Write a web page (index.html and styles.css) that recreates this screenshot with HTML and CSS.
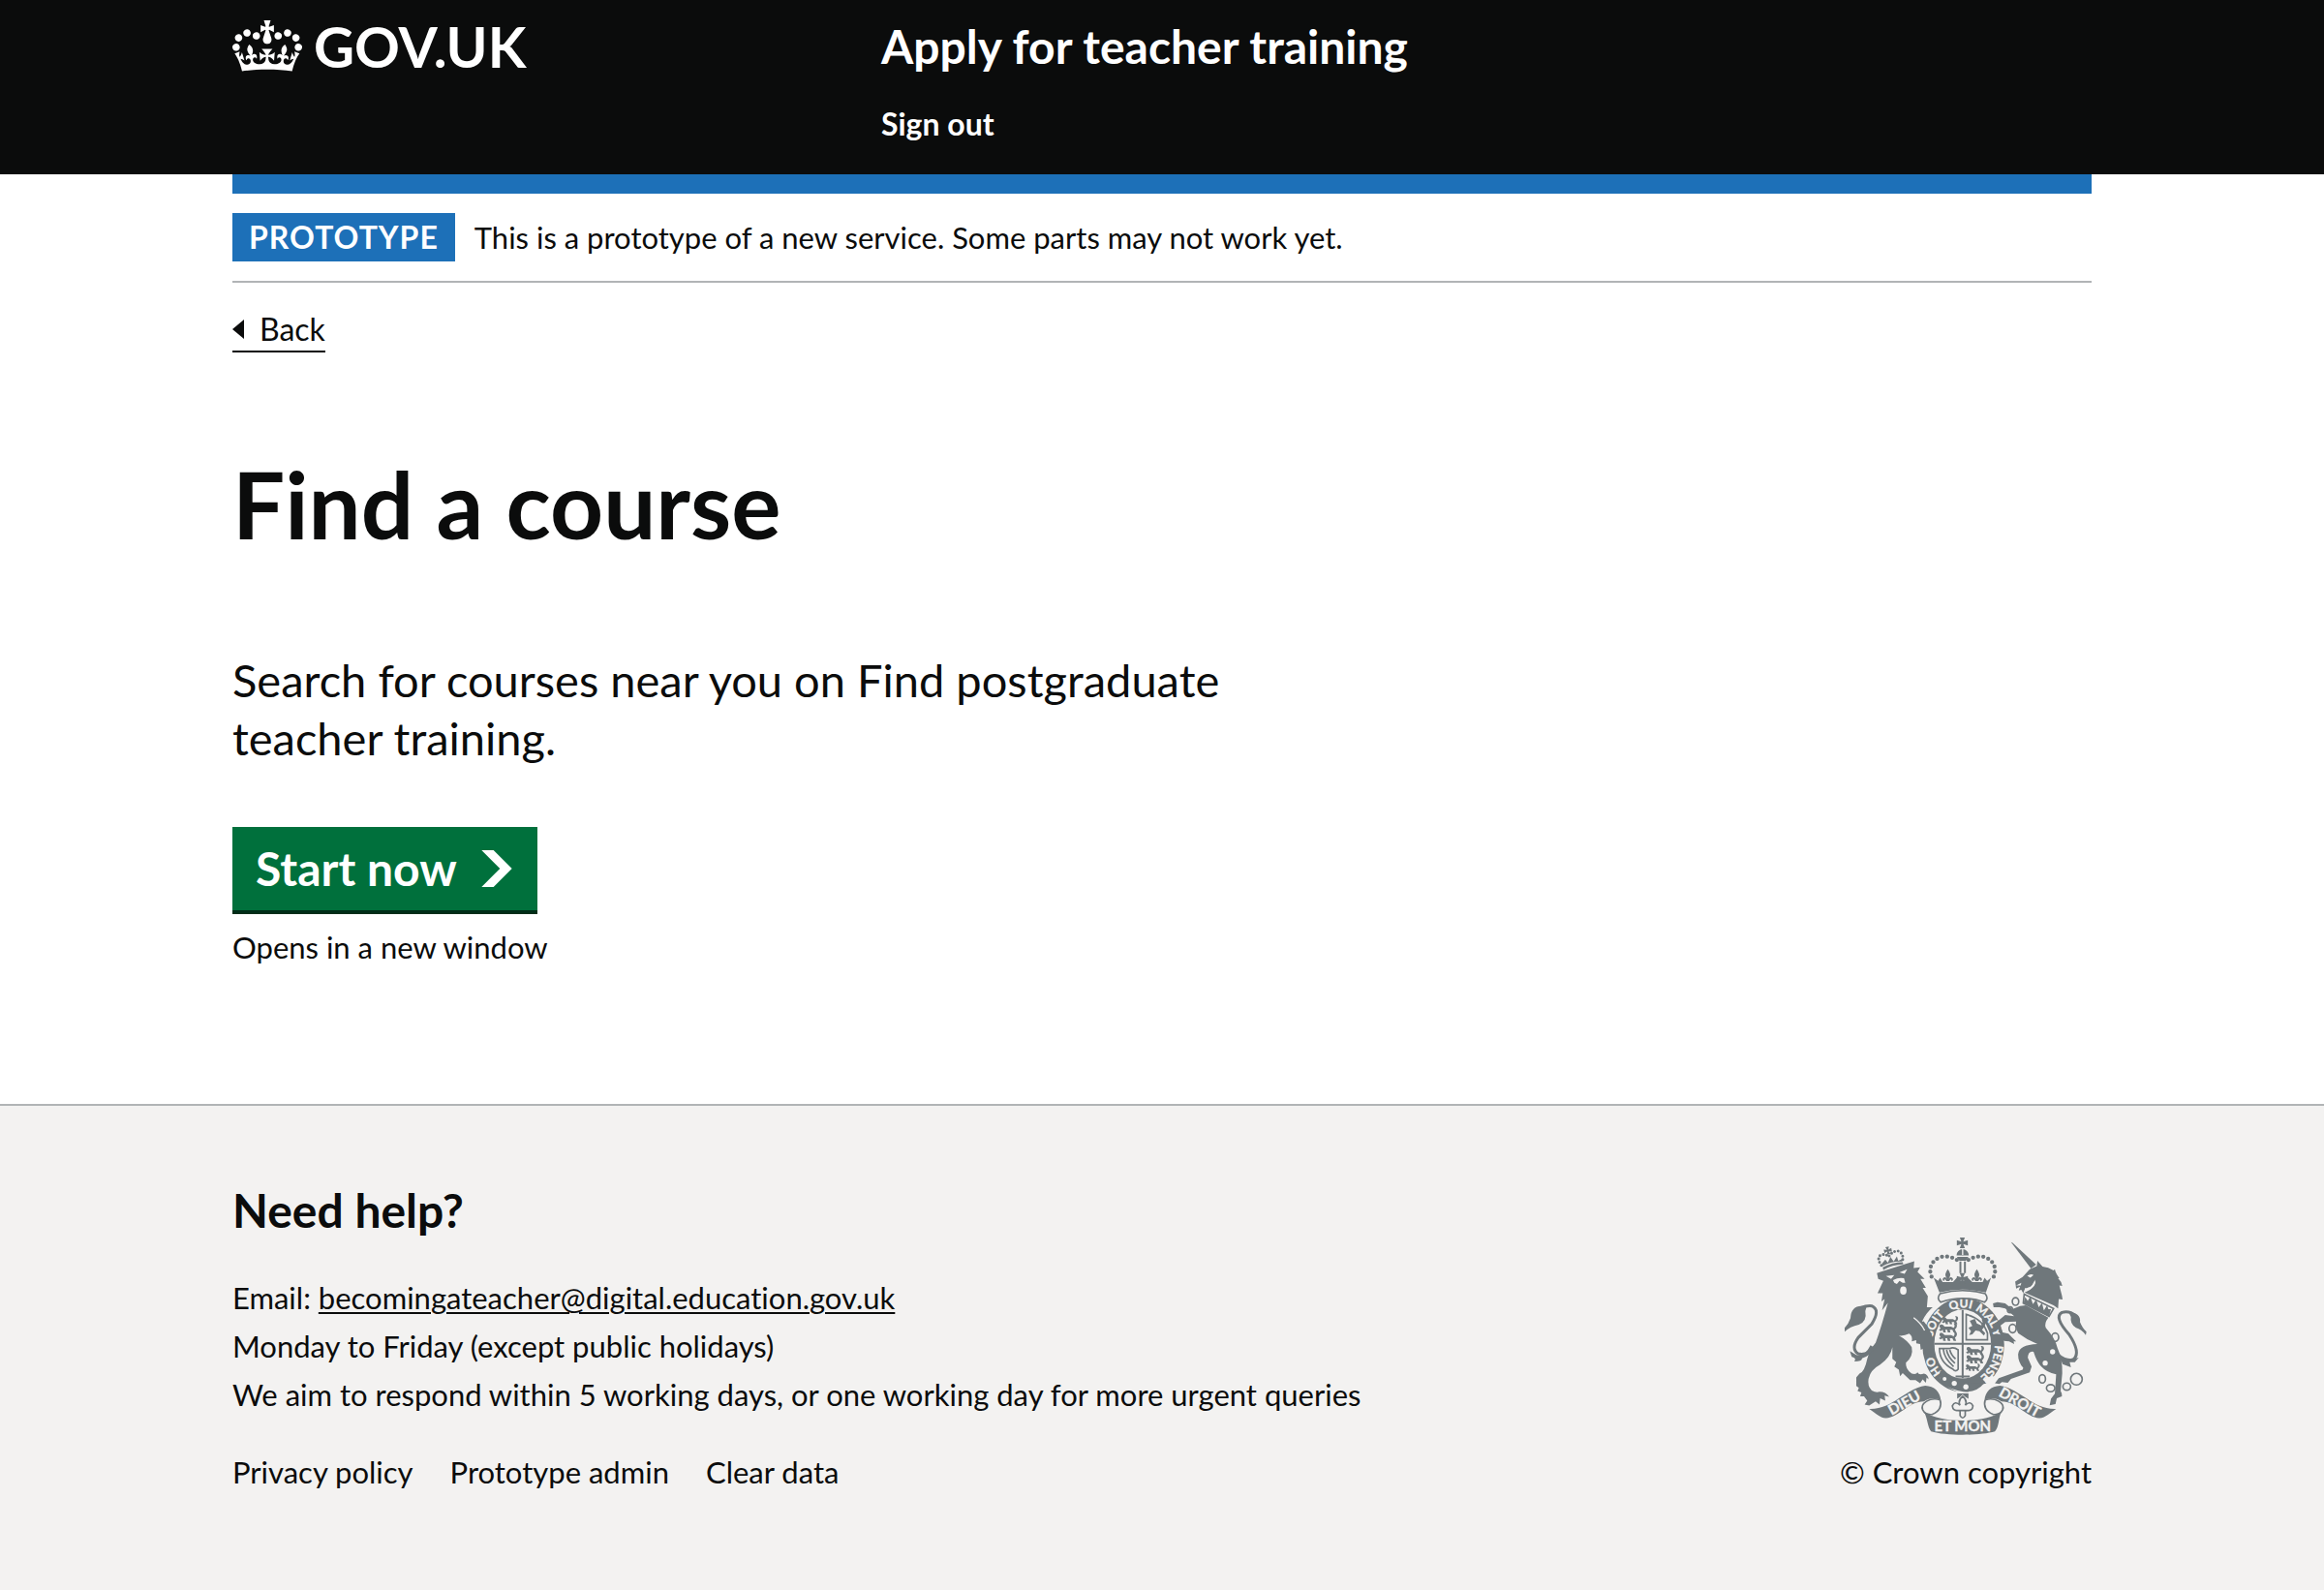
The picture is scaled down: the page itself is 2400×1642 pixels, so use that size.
FILE: index.html
```html
<!DOCTYPE html>
<html lang="en">
<head>
<meta charset="utf-8">
<meta name="viewport" content="width=device-width, initial-scale=1">
<title>Find a course - Apply for teacher training - GOV.UK</title>
<link rel="stylesheet" href="styles.css">
</head>
<body class="page">
<header class="header">
  <div class="container header-row">
    <a class="logo" href="#">
      <svg class="logo-crown" viewBox="0 0 132 97" aria-hidden="true"><path fill="currentColor" fill-rule="evenodd" d="M25 30.2c3.5 1.5 7.7-.2 9.1-3.7 1.5-3.6-.2-7.8-3.9-9.2-3.6-1.4-7.6.3-9.1 3.9-1.4 3.5.3 7.5 3.9 9zM9 39.5c3.6 1.5 7.8-.2 9.2-3.7 1.5-3.6-.2-7.8-3.9-9.1-3.6-1.5-7.6.2-9.1 3.8-1.4 3.5.3 7.5 3.8 9zM4.4 57.2c3.5 1.5 7.7-.2 9.1-3.8 1.5-3.6-.2-7.7-3.9-9.1-3.5-1.5-7.6.3-9.1 3.8-1.4 3.5.3 7.6 3.9 9.1zm38.3-21.4c3.5 1.5 7.7-.2 9.1-3.8 1.5-3.6-.2-7.7-3.9-9.1-3.6-1.5-7.6.3-9.1 3.8-1.3 3.6.4 7.7 3.9 9.1zm64.4-5.6c-3.6 1.5-7.8-.2-9.1-3.7-1.5-3.6.2-7.8 3.8-9.2 3.6-1.4 7.7.3 9.2 3.9 1.3 3.5-.4 7.5-3.9 9zm15.9 9.3c-3.6 1.5-7.7-.2-9.1-3.7-1.5-3.6.2-7.8 3.7-9.1 3.6-1.5 7.7.2 9.2 3.8 1.5 3.5-.3 7.5-3.8 9zm4.7 17.7c-3.6 1.5-7.8-.2-9.2-3.8-1.5-3.6.2-7.7 3.9-9.1 3.6-1.5 7.7.3 9.2 3.8 1.3 3.5-.4 7.6-3.9 9.1zM89.3 35.8c-3.6 1.5-7.8-.2-9.2-3.8-1.4-3.6.2-7.7 3.9-9.1 3.6-1.5 7.7.3 9.2 3.8 1.4 3.6-.3 7.7-3.9 9.1zM69.7 17.7l8.9 4.7V9.3l-8.9 2.8c-.2-.3-.5-.6-.9-.9L72.4 0H59.6l3.5 11.2c-.3.3-.6.5-.9.9l-8.8-2.8v13.1l8.8-4.7c.3.3.6.7.9.9l-5 15.4v.1c-.2.8-.4 1.6-.4 2.4 0 4.1 3.1 7.5 7 8.1h.2c.3 0 .7.1 1 .1.4 0 .7 0 1-.1h.2c4-.6 7.1-4.1 7.1-8.1 0-.8-.1-1.7-.4-2.4V34l-5.1-15.4c.4-.2.7-.6 1-.9zM66 92.8c16.9 0 32.8 1.1 47.1 3.2 4-16.9 8.9-26.7 14-33.5l-9.6-3.4c1 4.9 1.1 7.2 0 10.2-1.5-1.4-3-4.3-4.2-8.7L108.6 76c2.8-2 5-3.2 7.5-3.3-4.4 9.4-10 11.9-13.6 11.2-4.3-.8-6.3-4.6-5.6-7.9 1-4.7 5.7-5.9 8-.5 4.3-8.7-3-11.4-7.6-8.8 7.1-7.2 7.9-13.5 2.1-21.1-8 6.1-8.1 12.3-4.5 20.8-4.7-5.4-12.1-2.5-9.5 6.2 3.4-5.2 7.9-2 7.2 3.1-.6 4.3-6.4 7.8-13.5 7.2-10.3-.9-10.9-8-11.2-13.8 2.5-.5 7.1 1.8 11 7.3L80.2 60c-4.1 4.4-8 5.3-12.3 5.4 1.4-4.4 8-11.6 8-11.6H55.5s6.4 7.2 7.9 11.6c-4.2-.1-8-1-12.3-5.4l1.4 16.4c3.9-5.5 8.5-7.7 10.9-7.3-.3 5.8-.9 12.8-11.1 13.8-7.2.6-12.9-2.9-13.5-7.2-.7-5 3.8-8.3 7.1-3.1 2.7-8.7-4.6-11.6-9.4-6.2 3.7-8.5 3.6-14.7-4.6-20.8-5.8 7.6-5 13.9 2.2 21.1-4.7-2.6-11.9.1-7.7 8.8 2.3-5.5 7.1-4.2 8.1.5.7 3.3-1.3 7.1-5.7 7.9-3.5.7-9-1.8-13.5-11.2 2.5.1 4.7 1.3 7.5 3.3l-4.7-15.4c-1.2 4.4-2.7 7.2-4.3 8.7-1.1-3-.9-5.3 0-10.2l-9.5 3.4c5 6.9 9.9 16.7 14 33.5 14.8-2.1 30.8-3.2 47.7-3.2z"/></svg>
      <span class="logo-text">GOV.UK</span>
    </a>
    <div class="header-content">
      <a class="service-name" href="#">Apply for teacher training</a>
      <nav class="header-nav" aria-label="Account"><a class="nav-link" href="#">Sign out</a></nav>
    </div>
  </div>
</header>

<div class="container content">
  <div class="phase-banner">
    <strong class="tag">PROTOTYPE</strong>
    <span>This is a prototype of a new service. Some parts may not work yet.</span>
  </div>
  <a class="back-link" href="#">
    <svg class="back-arrow" viewBox="0 0 12 20" aria-hidden="true"><path fill="currentColor" d="M12 0v20L0 10z"/></svg>
    Back
  </a>
  <main class="main">
    <h1 class="title">Find a course</h1>
    <p class="lede">Search for courses near you on Find postgraduate teacher training.</p>
    <button class="start-button" type="button">
      Start now
      <svg class="start-arrow" viewBox="0 0 33 40" aria-hidden="true"><path fill="currentColor" d="M0 0h13l20 20-20 20H0l20-20z"/></svg>
    </button>
    <p class="hint">Opens in a new window</p>
  </main>
</div>

<footer class="footer">
  <div class="container footer-row">
    <div class="footer-help">
      <h2 class="footer-title">Need help?</h2>
      <ul class="plain-list">
        <li>Email: <a class="email" href="mailto:becomingateacher@digital.education.gov.uk">becomingateacher@digital.education.gov.uk</a></li>
        <li>Monday to Friday (except public holidays)</li>
        <li>We aim to respond within 5 working days, or one working day for more urgent queries</li>
      </ul>
      <ul class="plain-list footer-links">
        <li><a class="footer-link" href="#">Privacy policy</a></li>
        <li><a class="footer-link" href="#">Prototype admin</a></li>
        <li><a class="footer-link" href="#">Clear data</a></li>
      </ul>
    </div>
    <a class="copyright" href="#">
      <svg class="crest" viewBox="72 54 751 612" aria-hidden="true">
        <defs>
          <path id="garter" d="M440 503A98 118 0 0 1 342 387A98 118 0 0 1 440 271A98 118 0 0 1 538 387A98 118 0 0 1 440 503"/>
          <g id="fleur"><path d="M0-24Q11-10 4 0L2 4Q6-4 12 0Q18 6 10 10Q12 4 7 5L4 10H-4L-7 5Q-12 4-10 10Q-18 6-12 0Q-6-4-2 4L-4 0Q-11-10 0-24Z"/></g>
          <g id="cross"><path d="M-8-17H8L3-4L17-8V8L3 4L8 17H-8L-3 4L-17 8V-8L-3-4Z"/></g>
          <g id="passant"><path d="M-30-6Q-30-16-20-12L-14-6H6L14-2Q20-8 14-16Q26-18 24-6Q22 0 18 2L22 12H14L10 4L2 4L4 12H-4L-6 4H-12L-10 12H-18L-20 4L-26 8L-32 4L-26 0Z"/></g>
        </defs>

        <!-- Garter, shield and belt -->
        <ellipse class="crest-fill" cx="440" cy="387" rx="127" ry="146"/>
        <ellipse class="crest-paper" cx="438" cy="384" rx="88" ry="107"/>
        <g class="crest-motto">
          <text><textPath href="#garter" startOffset="104">HO</textPath></text>
          <text><textPath href="#garter" startOffset="232">SOIT</textPath></text>
          <text><textPath href="#garter" startOffset="328">QUI</textPath></text>
          <text><textPath href="#garter" startOffset="412">MAL</textPath></text>
          <text><textPath href="#garter" startOffset="467">Y</textPath></text>
          <text><textPath href="#garter" startOffset="560">PENSE</textPath></text>
        </g>
        <path class="crest-line" d="M438 278V490M350 383H526M416 485H460"/>
        <g class="crest-fill">
          <use href="#passant" transform="translate(402 312) scale(.9)"/>
          <use href="#passant" transform="translate(396 336)"/>
          <use href="#passant" transform="translate(396 362)"/>
          <use href="#passant" transform="translate(480 406)"/>
          <use href="#passant" transform="translate(480 432)"/>
          <use href="#passant" transform="translate(472 458) scale(.8)"/>
          <path d="M460 312L476 306L482 320L496 326L500 316Q494 306 502 304Q514 314 506 330L498 340L508 350L504 358L490 344L478 342L468 354L458 356L464 344L456 334L468 328Z"/>
        </g>
        <path class="crest-thin" d="M449 292V371H515V350Q500 305 449 292Z"/>
        <path class="crest-thin" d="M366 398H398Q410 392 424 402V462Q416 472 408 462Q366 440 366 398ZM378 400Q380 428 410 454M388 402Q392 424 414 444M398 402Q402 418 416 430"/>
        <path class="crest-paper" d="M366 486Q440 530 512 506L500 494Q520 488 530 480L545 500Q500 540 440 538Q380 520 366 486Z"/>
        <path class="crest-fill" d="M368 468Q390 466 390 484Q440 510 506 504Q480 536 440 532Q404 526 378 510Q362 496 368 468Z"/>
        <g class="crest-paper"><circle cx="412" cy="506" r="8"/><circle cx="448" cy="517" r="8"/><circle cx="382" cy="492" r="6"/></g>

        <!-- Royal crown -->
        <g transform="translate(270 30)">
          <path class="crest-fill" d="M78 148L92 158L98 148L106 162L138 162L150 148L167 160L184 148L198 162L230 162L236 148L244 158L256 148L240 194Q167 176 96 194Z"/>
          <path class="crest-band" d="M98 198Q167 178 238 198Q250 214 236 224Q167 200 100 224Q86 214 98 198Z"/>
          <path class="crest-fill" d="M149 79A18 18 0 0 1 187 79ZM150 84H186L178 96H158ZM158 98H164V134H158ZM172 98H178V134H172Z"/>
          <path class="crest-cut" d="M168 60V78"/>
          <g class="crest-fill"><use href="#cross" x="167" y="40"/><use href="#cross" x="167" y="151"/><use href="#fleur" transform="translate(122 148) scale(1.1)"/><use href="#fleur" transform="translate(212 148) scale(1.1)"/></g>
          <path class="crest-dots" d="M150 93C136 84 118 80 100 84C72 94 60 120 72 146"/>
          <path class="crest-dots" d="M186 93C200 84 218 80 236 84C264 94 276 120 264 146"/>
        </g>

        <!-- Lion -->
        <g transform="translate(30 30)">
          <path class="crest-fill" d="M142 134L160 128L236 104L258 97L256 118L276 116L268 130L290 152L277 152L294 180L284 180L300 205L297 240L318 240Q298 256 286 282Q312 312 318 348L320 362L310 380L304 370L294 382L290 366L278 372L276 354L264 352L264 342L250 346Q254 330 242 322Q226 330 210 328Q236 342 250 364Q256 392 232 412Q230 432 250 446Q264 450 268 442Q272 452 288 446Q302 450 302 464L296 458L294 474L284 464L276 476L262 466L245 466L222 444L214 454L210 434L196 424L202 410L190 400L190 364Q184 396 152 418Q122 434 116 462Q112 484 126 498Q140 506 150 502Q170 502 180 518L166 514L168 530L152 522L150 542L138 532L118 545L104 542L112 530L102 516L90 516L94 504L82 500L86 490L78 484L78 458L88 446Q104 440 112 400Q120 370 138 350Q156 300 176 226L158 250L166 214L156 222L160 196L144 196L162 158L146 152Z"/>
          <path class="crest-cut" d="M256 272Q280 290 290 312"/>
          <path class="crest-cut" d="M318 240Q298 256 284 284"/>
          <path class="crest-paper" d="M170 143L196 140L186 152ZM212 132L236 122L228 136ZM192 156Q210 146 226 150L230 164L222 164L212 158L204 168L196 164Z"/>
          <ellipse class="crest-paper" cx="224" cy="188" rx="10" ry="13"/>
          <path class="crest-tail" d="M144 352Q118 392 84 384Q60 368 84 334L126 292Q154 248 126 236Q112 234 90 242"/>
          <path class="crest-fill" d="M110 238Q62 228 60 274Q54 292 42 304V316Q58 300 86 294Q112 284 106 252ZM58 376L78 388Q106 392 122 358L132 364Q122 392 96 398Q96 408 72 408Q80 398 64 394Z"/>
          <path class="crest-fill" d="M160 116Q190 100 222 100L224 106Q190 108 162 124ZM158 104L168 92L176 102L184 84L194 98L204 82L208 96L222 90L220 98Q186 96 160 112Z"/>
          <use class="crest-fill" href="#cross" transform="translate(176 64) rotate(-12) scale(.7)"/>
          <path class="crest-dots crest-dots-small" d="M156 110Q140 88 154 78Q168 72 178 84Q190 64 210 66Q228 76 220 100"/>
        </g>

        <!-- Unicorn -->
        <g transform="translate(420 30)">
          <path class="crest-fill" d="M168 38L173 40L246 108L230 120Z"/>
          <path class="crest-fill" d="M181 160L204 146L226 122L248 112L250 96L266 114Q284 116 300 126L304 122Q306 134 318 150L314 150Q326 162 327 174L318 172L326 204L328 216L316 214L314 244L300 234L210 194Q246 180 240 158Q228 190 212 180L206 196L200 186L192 188L196 176L184 182Z"/>
          <path class="crest-paper" d="M218 142Q230 134 238 140L228 148ZM214 192Q250 176 243 154Q236 176 222 178L214 182ZM184 172L200 164L198 172Z"/>
          <path class="crest-thin" d="M209 199L300 244L286 268L206 227Z"/>
          <path class="crest-fill" d="M207 226L212 208L220 220L228 206L236 230L246 216L254 240L264 226L270 250L280 234L284 246L292 246L286 268Z"/>
          <path class="crest-fill" d="M196 236L214 234L284 272Q270 290 276 304Q306 338 312 366Q328 400 327 444L322 500Q328 510 326 516L310 522L306 540L288 544L292 524L304 508L308 448Q278 442 262 424Q248 410 238 378Q222 374 220 396L232 424L226 442L168 462L158 474L140 472L132 478L118 476L130 460L204 434L206 428Q190 410 190 386Q192 356 250 354Q216 340 190 320Q180 300 184 284L150 286L134 298L142 318L160 322L170 332L184 346L176 346L178 354L162 346L146 344L138 332L128 308L118 290L150 264L178 268L150 244L132 240L114 240L112 228L126 224L150 228L172 246Z"/>
          <path class="crest-tail" d="M318 400Q344 410 364 400Q384 378 348 324Q300 270 326 256Q350 250 368 266"/>
          <path class="crest-fill" d="M346 254Q386 258 382 286Q390 306 402 316L400 326Q386 308 370 304Q350 292 354 270ZM314 380Q340 408 378 396L366 410H350L354 426L328 416Z"/>
          <g class="crest-ring"><ellipse cx="182" cy="222" rx="10" ry="12"/><ellipse cx="165" cy="248" rx="8" ry="9"/><ellipse cx="173" cy="306" rx="11" ry="13"/><ellipse cx="305" cy="333" rx="11" ry="13"/><ellipse cx="265" cy="462" rx="10" ry="13"/><ellipse cx="291" cy="491" rx="13" ry="11"/><ellipse cx="341" cy="486" rx="12" ry="11"/><circle cx="371" cy="463" r="18"/></g>
          <g class="crest-paper"><circle cx="297" cy="378" r="8"/><circle cx="274" cy="413" r="8"/></g>
        </g>

        <!-- Pendant and ribbon -->
        <path class="crest-fill" d="M421 537H456V554L446 548L438 540L430 548L421 554Z"/>
        <path class="crest-pendant" d="M438 546Q454 560 446 574Q462 558 470 576Q468 592 454 590L446 592V606Q438 620 430 606V592L422 590Q408 592 406 576Q414 558 430 574Q422 560 438 546ZM422 590H454"/>
        <g id="scroll">
          <path class="crest-fill" d="M148 585C220 588 256 524 322 513C350 514 368 532 370 557C350 548 330 552 318 562C270 562 240 612 200 614C180 612 166 596 148 585Z"/>
          <path class="crest-thin" d="M368 557C336 548 306 568 314 588C320 600 330 604 344 602C366 594 374 576 368 557"/>
        </g>
        <use href="#scroll" transform="translate(876 0) scale(-1 1)"/>
        <path class="crest-fill" d="M318 594C372 630 504 630 558 594C548 616 552 640 538 655C490 669 386 669 340 655C328 640 330 616 318 594Z"/>
        <g class="crest-motto">
          <text class="crest-ribbon-text" x="438" y="655">ET MON</text>
          <text class="crest-ribbon-text" transform="translate(264 580) rotate(-29)">DIEU</text>
          <text class="crest-ribbon-text" transform="translate(608 578) rotate(29)">DROIT</text>
        </g>
      </svg>
      <span>© Crown copyright</span>
    </a>
  </div>
</footer>
</body>
</html>
```
FILE: styles.css
```css
*,
*::before,
*::after {
  box-sizing: border-box;
}

.page {
  --ink: #0b0c0c;
  --blue: #1d70b8;
  --rule: #b1b4b6;
  --panel: #f3f2f1;
  --crest: #6f777b;
  display: flex;
  flex-direction: column;
  min-height: 100vh;
  margin: 0;
  background: #fff;
  color: var(--ink);
  font: 400 31px/50px Lato, "Liberation Sans", sans-serif;
  font-variant-ligatures: no-common-ligatures;
}

.container {
  width: 80%;
  max-width: 1920px;
  margin: 0 auto;
}

/* Header */
.header {
  background: var(--ink);
  color: #fff;
}

.header-row {
  display: grid;
  grid-template-columns: 1fr 2fr;
  gap: 0 30px;
  padding: 18px 0 27px;
}

.logo {
  display: flex;
  align-items: flex-start;
  gap: 12px;
  color: inherit;
  text-decoration: none;
}

.logo-crown {
  width: 72px;
  height: 53px;
  margin-top: 3px;
}

.logo-text {
  font-size: 58px;
  font-weight: 700;
  line-height: 60px;
}

.header-content {
  padding-left: 10px;
}

.service-name {
  display: block;
  color: inherit;
  font-size: 48px;
  font-weight: 700;
  line-height: 60px;
  text-decoration: none;
}

.header-nav {
  margin-top: 25px;
}

.nav-link {
  display: block;
  color: inherit;
  font-size: 32px;
  font-weight: 700;
  text-decoration: none;
}

/* Phase banner and back link */
.content {
  border-top: 20px solid var(--blue);
}

.phase-banner {
  display: flex;
  gap: 20px;
  padding: 20px 0;
  border-bottom: 2px solid var(--rule);
}

.tag {
  padding: 0 17px;
  background: var(--blue);
  color: #fff;
  font-size: 32px;
  letter-spacing: 1px;
}

.back-link {
  display: inline-flex;
  align-items: center;
  gap: 16px;
  margin-top: 28px;
  padding-bottom: 2px;
  border-bottom: 2px solid var(--ink);
  color: inherit;
  font-size: 32px;
  line-height: 40px;
  text-decoration: none;
}

.back-arrow {
  width: 12px;
  height: 20px;
}

/* Main content */
.main {
  padding: 106px 0 137px;
}

.title {
  margin: 0 0 102px;
  font-size: 96px;
  font-weight: 700;
  line-height: 100px;
}

.lede {
  max-width: 58%;
  margin: 0 0 62px;
  font-size: 47px;
  line-height: 60px;
}

.start-button {
  display: flex;
  align-items: center;
  gap: 25px;
  padding: 17px 26px 17px 24px;
  border: 0;
  background: #00703c;
  box-shadow: 0 4px 0 #002d18;
  color: #fff;
  font-family: inherit;
  font-size: 48px;
  font-weight: 700;
  line-height: 52px;
}

.start-arrow {
  width: 32px;
  height: 38px;
}

.hint {
  margin: 13px 0 0;
}

/* Footer */
.footer {
  flex: 1;
  padding: 78px 0 96px;
  border-top: 2px solid var(--rule);
  background: var(--panel);
}

.footer-row {
  display: flex;
  align-items: flex-end;
  justify-content: space-between;
}

.footer-title {
  margin: 0 0 35px;
  font-size: 48px;
  font-weight: 700;
  line-height: 60px;
}

.plain-list {
  margin: 0;
  padding: 0;
  list-style: none;
}

.email {
  color: inherit;
  text-decoration-thickness: 2px;
  text-underline-offset: 3px;
}

.footer-links {
  display: flex;
  gap: 38px;
  margin-top: 30px;
}

.footer-link {
  color: inherit;
  text-decoration: none;
}

.copyright {
  display: flex;
  flex-direction: column;
  align-items: center;
  gap: 13px;
  color: inherit;
  text-decoration: none;
}

/* Crest artwork */
.crest {
  width: 250px;
  height: 204px;
}

.crest-fill {
  fill: var(--crest);
}

.crest-paper {
  fill: var(--panel);
}

.crest-line,
.crest-thin,
.crest-tail,
.crest-dots,
.crest-ring {
  fill: none;
  stroke: var(--crest);
}

.crest-line {
  stroke-width: 6;
}

.crest-thin {
  stroke-width: 5;
}

.crest-tail {
  stroke-width: 9;
}

.crest-ring {
  stroke-width: 5;
}

.crest-cut {
  fill: none;
  stroke: var(--panel);
  stroke-width: 4;
}

.crest-band,
.crest-pendant {
  fill: var(--panel);
  stroke: var(--crest);
  stroke-width: 5;
}

.crest-dots {
  stroke-width: 13;
  stroke-linecap: round;
  stroke-dasharray: 0 16;
}

.crest-dots-small {
  stroke-width: 9;
  stroke-dasharray: 0 11;
}

.crest-motto {
  fill: var(--panel);
  stroke: var(--panel);
  stroke-width: 1;
  font-size: 36px;
  font-weight: 700;
  text-anchor: middle;
}

.crest-ribbon-text {
  font-size: 45px;
}
```
